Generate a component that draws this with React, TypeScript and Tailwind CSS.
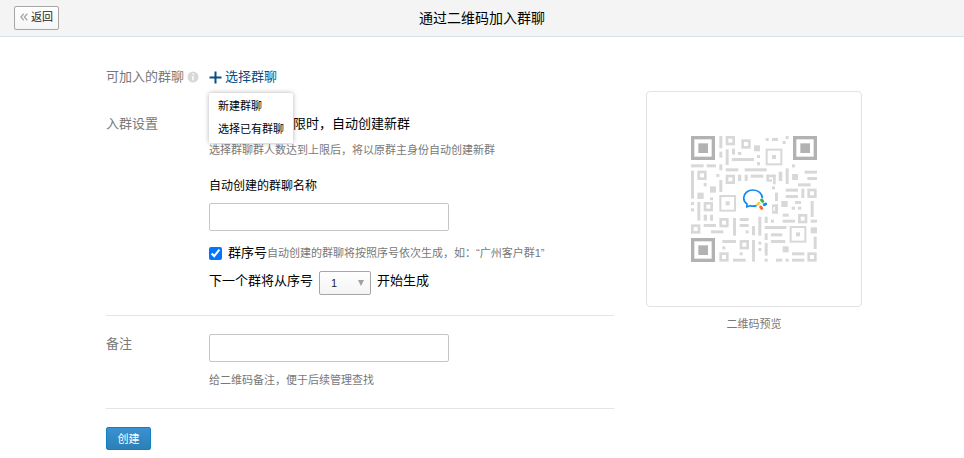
import { useState } from "react"

type Bar = [x: number, y: number, width: number, height: number]
type Square = [x: number, y: number]

const FINDERS: Square[] = [[153, 153], [459, 153], [153, 459]]

const MEDIUM_RINGS: Square[] = [[238, 330], [377, 191], [449, 423]]

const SMALL_RINGS: Square[] = [
  [257, 153], [304, 163], [172, 257], [257, 269], [191, 351], [153, 418],
  [238, 399], [238, 502], [299, 465], [502, 311], [474, 387], [502, 502],
]

const BARS: Bar[] = [
  [238, 153, 9, 37], [238, 200, 9, 18], [238, 238, 9, 18], [257, 193, 9, 47], [276, 191, 9, 18],
  [294, 201, 10, 9], [276, 219, 66, 9], [342, 181, 18, 18], [351, 210, 9, 9], [351, 231, 9, 10],
  [377, 159, 9, 9], [396, 159, 18, 9], [437, 153, 9, 9], [428, 168, 9, 9], [456, 238, 9, 9],
  [153, 238, 38, 9], [200, 238, 28, 9], [153, 257, 9, 84], [229, 267, 9, 9], [191, 294, 9, 10],
  [210, 304, 18, 19], [172, 323, 19, 19], [210, 337, 9, 9], [238, 285, 9, 36], [257, 250, 38, 9],
  [314, 250, 66, 9], [294, 269, 10, 19], [314, 269, 9, 19], [332, 269, 38, 9], [416, 260, 11, 28],
  [437, 250, 9, 47], [456, 267, 18, 18], [494, 257, 37, 9], [502, 276, 29, 9], [474, 295, 38, 9],
  [396, 304, 9, 9], [437, 311, 37, 9], [437, 330, 37, 9], [484, 311, 9, 28], [405, 323, 9, 25],
  [424, 348, 19, 18], [465, 348, 18, 9], [474, 365, 10, 9], [455, 365, 10, 9], [512, 348, 9, 48],
  [153, 351, 9, 9], [153, 370, 9, 9], [172, 351, 9, 56], [191, 389, 10, 18], [210, 389, 9, 18],
  [191, 417, 37, 9], [213, 436, 37, 9], [279, 399, 9, 53], [299, 399, 27, 9], [299, 417, 27, 9],
  [317, 436, 9, 9], [336, 423, 9, 28], [355, 395, 9, 57], [374, 395, 9, 19], [393, 404, 9, 9],
  [428, 386, 18, 9], [428, 404, 37, 9], [512, 404, 19, 9], [374, 423, 65, 9], [374, 445, 9, 20],
  [393, 445, 34, 9], [393, 465, 43, 9], [512, 427, 19, 18], [521, 455, 9, 37], [428, 484, 18, 18],
  [456, 502, 37, 9], [456, 521, 37, 9], [408, 521, 19, 9], [437, 521, 9, 9], [374, 521, 9, 9],
  [374, 474, 9, 38], [355, 470, 9, 9], [355, 489, 9, 9], [336, 465, 9, 65], [247, 465, 41, 9],
  [247, 484, 9, 9], [279, 521, 38, 9], [299, 502, 9, 9],
  // rings cut open by the logo
  [379, 269, 28, 8], [379, 269, 8, 21], [399, 269, 8, 29], [387, 283, 9, 7],
  [396, 358, 18, 8], [405, 358, 9, 28], [396, 377, 18, 9], [396, 366, 4, 11],
]

function QrCode() {
  return (
    <svg viewBox="153 153 378 378" className="w-[126px]" role="img" aria-label="二维码预览">
      {FINDERS.map(([x, y]) => (
        <g key={`${x}-${y}`}>
          <rect x={x + 5} y={y + 5} width="62" height="62" fill="none" stroke="#b2b2b2" strokeWidth="10" />
          <rect x={x + 22} y={y + 22} width="29" height="29" fill="#b2b2b2" />
        </g>
      ))}
      {MEDIUM_RINGS.map(([x, y]) => (
        <g key={`${x}-${y}`}>
          <rect x={x + 3} y={y + 3} width="44" height="44" fill="none" stroke="#d8d8d8" strokeWidth="6" />
          <rect x={x + 19} y={y + 19} width="12" height="12" fill="#d8d8d8" />
        </g>
      ))}
      {SMALL_RINGS.map(([x, y]) => (
        <rect key={`${x}-${y}`} x={x + 4} y={y + 4} width="20" height="20" fill="none" stroke="#d8d8d8" strokeWidth="8" />
      ))}
      {BARS.map(([x, y, width, height]) => (
        <rect key={`${x}-${y}-${width}`} x={x} y={y} width={width} height={height} fill="#d8d8d8" />
      ))}
      <path
        d="M350 362 C343 364 336 364 330 362 L320 366 L321 357 C314 352 311 346 311 339 C311 325 324 315 339 315 C355 315 367 326 367 340"
        fill="none"
        stroke="#1389ee"
        strokeWidth="5"
        strokeLinejoin="round"
      />
      <g strokeWidth="9" strokeLinecap="round">
        <path d="M365 345 L368 349" stroke="#2bb84a" />
        <path d="M373 359 L377 357" stroke="#1389ee" />
        <path d="M362 366 L365 370" stroke="#fb6530" />
        <path d="M353 358 L357 355" stroke="#ffcc33" />
      </g>
    </svg>
  )
}

export default function App() {
  const [menuOpen, setMenuOpen] = useState(true)
  const [numbered, setNumbered] = useState(true)

  return (
    <div className="min-h-screen bg-white font-['Liberation_Sans','Noto_Sans_CJK_SC',sans-serif] text-[13px] leading-5 text-black">
      <header className="relative flex h-[37px] items-center justify-center border-b border-[#d9e1e8] bg-[#f4f4f4]">
        <button
          type="button"
          className="absolute left-3.5 flex h-6 w-[45px] items-center justify-center gap-[3px] rounded-xs border border-[#a6a6a6] bg-linear-to-b from-white to-[#f6f6f6] pb-0.5 text-[11px] text-[#222]"
        >
          <svg viewBox="0 0 8 8" className="w-2" fill="none" stroke="#a8a8a8" strokeWidth="1.3" aria-hidden="true">
            <path d="M3.8 0.8 L0.9 4 L3.8 7.2 M7.3 0.8 L4.4 4 L7.3 7.2" />
          </svg>
          返回
        </button>
        <h1 className="text-sm">通过二维码加入群聊</h1>
      </header>

      <main className="flex items-start gap-8 pt-[30px] pr-[102px] pl-[106px]">
        <form className="min-w-0 flex-1" onSubmit={(e) => e.preventDefault()}>
          <div className="flex">
            <div className="flex w-[103px] shrink-0 items-center gap-[3px] text-[#787878]">
              可加入的群聊
              <svg viewBox="0 0 12 12" className="w-3" aria-hidden="true">
                <circle cx="6" cy="6" r="5.5" fill="#d8d8d8" />
                <path d="M6.3 2.5 V4 M6 5 V9.3" stroke="#fff" strokeWidth="1.4" />
              </svg>
            </div>
            <div className="relative">
              <button
                type="button"
                aria-expanded={menuOpen}
                onClick={() => setMenuOpen(!menuOpen)}
                className="flex items-center gap-[3px] text-[#0b4d80]"
              >
                <svg viewBox="0 0 13 13" className="w-[13px]" stroke="#0b4d80" strokeWidth="2" aria-hidden="true">
                  <path d="M6.5 0.5 V12.5 M0.5 6.5 H12.5" />
                </svg>
                选择群聊
              </button>
              {menuOpen && (
                <div className="absolute top-[26px] left-0 z-10 flex flex-col rounded-xs bg-white pt-px pb-[3px] text-[11px] whitespace-nowrap shadow-[0_0_5px_rgba(0,0,0,0.3)]">
                  <button type="button" className="h-[23px] px-[9px] text-left">新建群聊</button>
                  <button type="button" className="h-[23px] px-[9px] text-left">选择已有群聊</button>
                </div>
              )}
            </div>
          </div>

          <div className="mt-[27px] flex">
            <div className="w-[103px] shrink-0 text-[#787878]">入群设置</div>
            <div>
              <label className="flex items-center gap-1.5">
                <input type="checkbox" defaultChecked className="size-[13px]" />
                群人数达上限时，自动创建新群
              </label>
              <p className="mt-1.5 text-[11px] text-[#787878]">选择群聊群人数达到上限后，将以原群主身份自动创建新群</p>
              <label htmlFor="group-name" className="mt-4 block text-xs leading-5">自动创建的群聊名称</label>
              <input
                id="group-name"
                type="text"
                className="mt-[7px] block h-7 w-60 rounded-xs border border-[#c6c6c6] px-2"
              />
              <div className="mt-3 flex items-center">
                <label className="flex items-center gap-1.5">
                  <input
                    type="checkbox"
                    checked={numbered}
                    onChange={(e) => setNumbered(e.target.checked)}
                    className="size-[13px]"
                  />
                  群序号
                </label>
                <span className="text-[11px] text-[#787878]">自动创建的群聊将按照序号依次生成，如：“广州客户群1”</span>
              </div>
              <div className="mt-2 flex items-start gap-1.5">
                <label htmlFor="start-number">下一个群将从序号</label>
                <div className="relative">
                  <select
                    id="start-number"
                    className="block h-6 w-[52px] appearance-none rounded-xs border border-[#a6a6a6] bg-linear-to-b from-white to-[#f4f4f4] pl-[11px] text-[11px] text-[#222]"
                  >
                    <option>1</option>
                    <option>2</option>
                    <option>3</option>
                  </select>
                  <svg viewBox="0 0 6 6" className="pointer-events-none absolute top-[9px] right-[7px] w-1.5" fill="#a0a0a0" aria-hidden="true">
                    <path d="M0 0 H6 L3 6 Z" />
                  </svg>
                </div>
                <span>开始生成</span>
              </div>
            </div>
          </div>

          <div className="mt-5 flex border-y border-[#e4e4e4] py-[18px]">
            <label htmlFor="remark" className="w-[103px] shrink-0 text-[#787878]">备注</label>
            <div>
              <input id="remark" type="text" className="block h-7 w-60 rounded-xs border border-[#c6c6c6] px-2" />
              <p className="mt-2 text-[11px] text-[#787878]">给二维码备注，便于后续管理查找</p>
            </div>
          </div>

          <button
            type="submit"
            className="mt-[18px] h-[23px] w-[45px] rounded-xs border border-[#0d84c0] bg-linear-to-b from-[#3a92d2] to-[#2d7fb5] text-[11px] text-white"
          >
            创建
          </button>
        </form>

        <figure className="mt-6 w-[216px] shrink-0 text-center">
          <div className="flex aspect-square items-center justify-center rounded-sm border border-[#e2e2e2]">
            <QrCode />
          </div>
          <figcaption className="mt-[7px] text-[11px] text-[#787878]">二维码预览</figcaption>
        </figure>
      </main>
    </div>
  )
}
